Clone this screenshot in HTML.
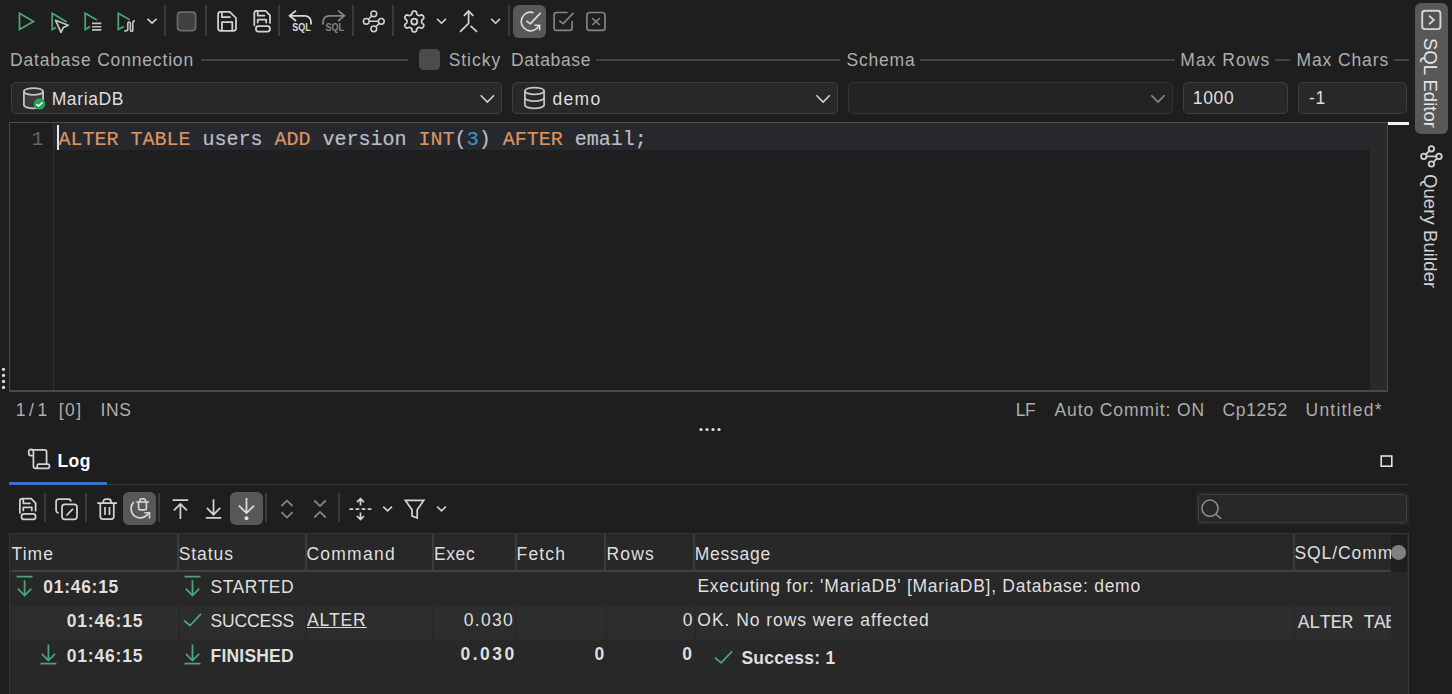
<!DOCTYPE html>
<html lang="en"><head><meta charset="utf-8"><title>SQL Commander</title>
<style>
html,body{margin:0;padding:0}
body{width:1452px;height:694px;background:#1e1e1e;overflow:hidden;position:relative;font-family:'Liberation Sans',sans-serif;color:#dfdfdf}
.t{position:absolute;white-space:pre;line-height:1;margin:0}
.a{position:absolute;box-sizing:border-box}
.sep{position:absolute;width:1.5px;background:#3a3a3a}
.hl{position:absolute;height:1.4px;background:#434343;top:59.3px}
.field{position:absolute;box-sizing:border-box;top:82px;height:32px;border:1px solid #3f3f3f;border-radius:5px;background:#282828}
.selbtn{position:absolute;box-sizing:border-box;border-radius:6px;background:#585858}
svg{position:absolute;left:0;top:0;overflow:visible}
.rot{transform-origin:0 0;transform:rotate(90deg)}
.clip{position:absolute;overflow:hidden}
</style></head>
<body>

<!-- ===== main toolbar ===== -->
<div id="toolbar">
  <div class="sep" style="left:164.2px;top:5px;height:31px"></div>
  <div class="sep" style="left:205.2px;top:5px;height:31px"></div>
  <div class="sep" style="left:278.2px;top:5px;height:31px"></div>
  <div class="sep" style="left:352.4px;top:5px;height:31px"></div>
  <div class="sep" style="left:392.4px;top:5px;height:31px"></div>
  <div class="sep" style="left:508px;top:5px;height:31px"></div>
  <div class="selbtn" style="left:513px;top:5px;width:33px;height:33px"></div>
  <svg width="1452" height="694" viewBox="0 0 1452 694" aria-hidden="true">
<path d="M19.5,13.3L33.5,21.4L19.5,29.5Z" fill="none" stroke="#4ba578" stroke-width="1.75"/>
<path d="M66.7,21.9L52.2,13.2V29.6L56,27.4" fill="none" stroke="#4ba578" stroke-width="1.75"/>
<path d="M55.6,20.3L68.2,25.3L63.3,27.5L61,32.3Z" fill="none" stroke="#c4c4bb" stroke-width="1.75" stroke-linejoin="round"/>
<path d="M96.9,20.1L85.2,13.2V29.6L90.3,26.6" fill="none" stroke="#4ba578" stroke-width="1.75"/>
<path d="M92,23.4H101.4M92,26.7H101.4M92,29.9H101.4" fill="none" stroke="#c4c4bb" stroke-width="1.65"/>
<path d="M129.6,19.8L118.3,13.2V29.6L123.8,26.4" fill="none" stroke="#4ba578" stroke-width="1.75"/>
<path d="M124.3,30.8H126.1a1.7,1.7 0 0 0 1.7,-1.7V23.4a1.3,1.3 0 0 1 2.6,0V30.2a1.2,1.2 0 0 0 2.4,0V23a2.2,2.2 0 0 1 2.2,-2.2" fill="none" stroke="#c4c4bb" stroke-width="1.65"/>
<path d="M147.5,18.9L152.05,23.2L156.6,18.9" fill="none" stroke="#d2d2d2" stroke-width="1.6"/>
<rect x="177.5" y="12.1" width="18.1" height="18.5" rx="3" fill="#404040" stroke="#6c6c6c" stroke-width="1.65"/>
<g fill="none" stroke="#d2d2d2" stroke-width="1.75" stroke-linejoin="round"><path d="M220.6,11.9H229.8L236,18V28.3a2.5,2.5 0 0 1 -2.5,2.5H220.6a2.5,2.5 0 0 1 -2.5,-2.5V14.4a2.5,2.5 0 0 1 2.5,-2.5Z"/><path d="M221.9,12.2V17.2H230.6"/><path d="M221.9,30.6V22.2H232.3V30.6"/></g>
<g transform="translate(0,0)" fill="none" stroke="#d2d2d2" stroke-width="1.75" stroke-linejoin="round" stroke-linecap="round"><path d="M254.3,25.2V13.3a2.4,2.4 0 0 1 2.4,-2.4H265.6L270,15.3V22.9"/><path d="M257.7,11.2V15.5H264.4"/><path d="M257.7,22.6V19.7H266.2V22.6"/><rect x="255.9" y="26.1" width="14.1" height="5.6" rx="2.6"/></g>
<g fill="none" stroke="#d8d8d8" stroke-width="1.75"><path d="M296,10.6L289.6,15.8L296,21"/><path d="M289.8,15.8H305a6,6 0 0 1 6,6V24.6"/></g>
<text x="292.3" y="30.9" font-family="'Liberation Sans',sans-serif" font-weight="700" font-size="10" fill="#d8d8d8" textLength="18.6" lengthAdjust="spacingAndGlyphs">SQL</text>
<g fill="none" stroke="#858585" stroke-width="1.75"><path d="M338,10.6L344.4,15.8L338,21"/><path d="M344.2,15.8H329a6,6 0 0 0 -6,6V24.6"/></g>
<text x="325.4" y="30.9" font-family="'Liberation Sans',sans-serif" font-weight="700" font-size="10" fill="#858585" textLength="18.6" lengthAdjust="spacingAndGlyphs">SQL</text>
<g fill="none" stroke="#d2d2d2" stroke-width="1.5"><circle cx="373.80" cy="13.80" r="2.9"/><circle cx="366.30" cy="21.30" r="2.9"/><circle cx="381.30" cy="21.30" r="2.9"/><circle cx="373.80" cy="28.80" r="2.9"/><path d="M369.20,21.30H378.40 M368.35,19.25L371.75,15.85 M379.25,23.35L375.85,26.75"/></g>
<path d="M421.60,21.50 L421.62,21.18 L421.68,20.85 L421.79,20.51 L421.95,20.15 L422.19,19.75 L422.90,19.20 L423.56,18.58 L423.73,18.07 L423.77,17.58 L423.72,17.11 L423.59,16.66 L423.39,16.25 L423.13,15.87 L422.81,15.54 L422.43,15.26 L421.98,15.05 L421.46,14.94 L420.59,15.21 L419.76,15.54 L419.29,15.55 L418.90,15.51 L418.55,15.43 L418.24,15.32 L417.95,15.18 L417.68,15.00 L417.43,14.78 L417.19,14.52 L416.96,14.20 L416.73,13.79 L416.60,12.90 L416.40,12.02 L416.04,11.62 L415.64,11.34 L415.21,11.15 L414.76,11.04 L414.30,11.00 L413.84,11.04 L413.39,11.15 L412.96,11.34 L412.56,11.62 L412.20,12.02 L412.00,12.90 L411.87,13.79 L411.64,14.20 L411.41,14.52 L411.17,14.78 L410.92,15.00 L410.65,15.18 L410.36,15.32 L410.05,15.43 L409.70,15.51 L409.31,15.55 L408.84,15.54 L408.01,15.21 L407.14,14.94 L406.62,15.05 L406.17,15.26 L405.79,15.54 L405.47,15.87 L405.21,16.25 L405.01,16.66 L404.88,17.11 L404.83,17.58 L404.87,18.07 L405.04,18.58 L405.70,19.20 L406.41,19.75 L406.65,20.15 L406.81,20.51 L406.92,20.85 L406.98,21.18 L407.00,21.50 L406.98,21.82 L406.92,22.15 L406.81,22.49 L406.65,22.85 L406.41,23.25 L405.70,23.80 L405.04,24.42 L404.87,24.93 L404.83,25.42 L404.88,25.89 L405.01,26.34 L405.21,26.75 L405.47,27.13 L405.79,27.46 L406.17,27.74 L406.62,27.95 L407.14,28.06 L408.01,27.79 L408.84,27.46 L409.31,27.45 L409.70,27.49 L410.05,27.57 L410.36,27.68 L410.65,27.82 L410.92,28.00 L411.17,28.22 L411.41,28.48 L411.64,28.80 L411.87,29.21 L412.00,30.10 L412.20,30.98 L412.56,31.38 L412.96,31.66 L413.39,31.85 L413.84,31.96 L414.30,32.00 L414.76,31.96 L415.21,31.85 L415.64,31.66 L416.04,31.38 L416.40,30.98 L416.60,30.10 L416.73,29.21 L416.96,28.80 L417.19,28.48 L417.43,28.22 L417.68,28.00 L417.95,27.82 L418.24,27.68 L418.55,27.57 L418.90,27.49 L419.29,27.45 L419.76,27.46 L420.59,27.79 L421.46,28.06 L421.98,27.95 L422.43,27.74 L422.81,27.46 L423.13,27.13 L423.39,26.75 L423.59,26.34 L423.72,25.89 L423.77,25.42 L423.73,24.93 L423.56,24.42 L422.90,23.80 L422.19,23.25 L421.95,22.85 L421.79,22.49 L421.68,22.15 L421.62,21.82Z" fill="none" stroke="#d2d2d2" stroke-width="1.75" stroke-linejoin="round"/>
<circle cx="414.3" cy="21.5" r="3" fill="none" stroke="#d2d2d2" stroke-width="1.75"/>
<path d="M437.1,18.9L441.5,23.2L445.9,18.9" fill="none" stroke="#d2d2d2" stroke-width="1.6"/>
<path d="M463.9,15.8L468.6,10.9L473.3,15.8M468.6,11V23.4L460,31.8M470.5,25.9L477.1,31.8" fill="none" stroke="#d2d2d2" stroke-width="1.75"/>
<path d="M491.2,18.9L495.6,23.2L500,18.9" fill="none" stroke="#d2d2d2" stroke-width="1.6"/>
<g fill="none" stroke="#dcdcdc" stroke-width="1.65"><path d="M533.6,12.7A9.3,9.3 0 1 0 538.9,25.6"/><path d="M534.5,25.2H539.6V30.6"/><path d="M526.4,20.8L530.3,23.8L540.6,12.9"/></g>
<g fill="none" stroke="#858585" stroke-width="1.65"><path d="M567.6,12.5H556.6a2.5,2.5 0 0 0 -2.5,2.5V27.9a2.5,2.5 0 0 0 2.5,2.5H569.6a2.5,2.5 0 0 0 2.5,-2.5V21"/><path d="M559.3,20.6L563.1,23.7L573.6,12.9"/></g>
<g fill="none" stroke="#858585" stroke-width="1.65"><rect x="586.9" y="12.5" width="18.1" height="17.9" rx="2.7"/><path d="M592.2,18.2L599.8,25M599.8,18.2L592.2,25"/></g>
</svg>
</div>

<!-- ===== connection form ===== -->
<div id="form">
  <div class="hl" style="left:200.5px;width:207.5px"></div>
  <div class="hl" style="left:596px;width:244px"></div>
  <div class="hl" style="left:920px;width:254.5px"></div>
  <div class="hl" style="left:1275px;width:15px"></div>
  <div class="hl" style="left:1394px;width:15px"></div>
  <div class="a" style="left:419px;top:48.6px;width:21px;height:21px;border-radius:4.5px;background:#4b4b4b"></div>
  <div class="field" style="left:11px;width:491px"></div>
  <div class="field" style="left:512px;width:326px"></div>
  <div class="field" style="left:848px;width:325px;background:#232323;border-color:#343434"></div>
  <div class="field" style="left:1183px;width:105px"></div>
  <div class="field" style="left:1297.5px;width:109.5px"></div>
  <svg width="1452" height="694" viewBox="0 0 1452 694" aria-hidden="true">
<g stroke="#c6c6c6" stroke-width="1.75"><path d="M23.9,91.4V105a9.6,3.4 0 0 0 19.2,0V91.4" fill="#3c3c3c"/><ellipse cx="33.5" cy="91.4" rx="9.6" ry="3.4" fill="#333"/></g>
<circle cx="39.5" cy="104" r="5.8" fill="#1fa55b"/><path d="M36.3,104.3L38.5,106L42.6,102.3" fill="none" stroke="#fff" stroke-width="1.6"/>
<path d="M480.7,95.3L487.35,102L494,95.3" fill="none" stroke="#d2d2d2" stroke-width="1.6"/>
<g fill="none" stroke="#c6c6c6" stroke-width="1.75"><ellipse cx="534.5" cy="90.9" rx="9.6" ry="3.4"/><path d="M524.9,90.9V104.9a9.6,3.4 0 0 0 19.2,0V90.9"/><path d="M524.9,97.7a9.6,3.4 0 0 0 19.2,0"/></g>
<path d="M816.4,95.3L823.0999999999999,102L829.8,95.3" fill="none" stroke="#d2d2d2" stroke-width="1.6"/>
<path d="M1151.3,95.3L1157.9499999999998,102L1164.6,95.3" fill="none" stroke="#8a8a8a" stroke-width="1.6"/>
</svg>
  <span class="t " style="left:9.95px;top:52px;font-size:17.5px;font-weight:400;color:#adadad;font-family:'Liberation Sans', sans-serif;letter-spacing:0.827px;">Database Connection</span>
<span class="t " style="left:448.65px;top:52px;font-size:17.5px;font-weight:400;color:#adadad;font-family:'Liberation Sans', sans-serif;letter-spacing:0.963px;">Sticky</span>
<span class="t " style="left:510.95px;top:52px;font-size:17.5px;font-weight:400;color:#adadad;font-family:'Liberation Sans', sans-serif;letter-spacing:0.654px;">Database</span>
<span class="t " style="left:846.45px;top:52px;font-size:17.5px;font-weight:400;color:#adadad;font-family:'Liberation Sans', sans-serif;letter-spacing:0.799px;">Schema</span>
<span class="t " style="left:1180.35px;top:52px;font-size:17.5px;font-weight:400;color:#adadad;font-family:'Liberation Sans', sans-serif;letter-spacing:1.016px;">Max Rows</span>
<span class="t " style="left:1296.45px;top:52px;font-size:17.5px;font-weight:400;color:#adadad;font-family:'Liberation Sans', sans-serif;letter-spacing:0.886px;">Max Chars</span>
<span class="t " style="left:51.65px;top:91px;font-size:17.5px;font-weight:400;color:#dfdfdf;font-family:'Liberation Sans', sans-serif;letter-spacing:0.620px;">MariaDB</span>
<span class="t " style="left:552.55px;top:91px;font-size:17.5px;font-weight:400;color:#dfdfdf;font-family:'Liberation Sans', sans-serif;letter-spacing:1.273px;">demo</span>
<span class="t " style="left:1192.75px;top:90px;font-size:17.5px;font-weight:400;color:#dfdfdf;font-family:'Liberation Sans', sans-serif;letter-spacing:0.654px;">1000</span>
<span class="t " style="left:1308.95px;top:90px;font-size:17.5px;font-weight:400;color:#dfdfdf;font-family:'Liberation Sans', sans-serif;letter-spacing:0.637px;">-1</span>
</div>

<!-- ===== editor ===== -->
<div id="editor-pane">
<div id="editor" class="a" style="left:9px;top:122px;width:1379px;height:270px;border:1px solid #484848;border-top:1.4px solid #4c4c4c;border-bottom:2px solid #484848;background:#1e1e1e">
  <div class="a" style="left:43.3px;top:0;width:1px;height:267px;background:#303030"></div>
  <div class="a" style="left:44px;top:0.3px;width:1316px;height:26.3px;background:#26282e"></div>
  <div class="a" style="left:1360px;top:0;width:17px;height:267px;background:#292929"></div>
  <div class="a" style="left:47px;top:1.6px;width:2px;height:25px;background:#dfe7e7"></div>
</div>
<div class="a" style="left:1388px;top:122px;width:21px;height:2.5px;background:#f2f2f2"></div>
<span class="t" style="left:31.6px;top:130px;font-family:'Liberation Mono',monospace;font-size:20px;color:#62656c">1</span>
<pre class="t" id="code" style="left:58.5px;top:130px;font-family:'Liberation Mono',monospace;font-size:20px;letter-spacing:0;color:#bcbec4;-webkit-text-stroke:0.2px"><span style="color:#dc9560">ALTER TABLE</span> users <span style="color:#dc9560">ADD</span> version <span style="color:#dc9560">INT</span>(<span style="color:#3a94c5">3</span>) <span style="color:#dc9560">AFTER</span> email;</pre>
<svg width="1452" height="694" viewBox="0 0 1452 694" aria-hidden="true">
<circle cx="3.5" cy="369.3" r="1.6" fill="#dedede"/>
<circle cx="3.5" cy="375.4" r="1.6" fill="#dedede"/>
<circle cx="3.5" cy="381.4" r="1.6" fill="#dedede"/>
<circle cx="3.5" cy="387.4" r="1.6" fill="#dedede"/>
<circle cx="701" cy="429.5" r="1.6" fill="#dedede"/>
<circle cx="707" cy="429.5" r="1.6" fill="#dedede"/>
<circle cx="713" cy="429.5" r="1.6" fill="#dedede"/>
<circle cx="719" cy="429.5" r="1.6" fill="#dedede"/>
</svg>
</div>

<!-- ===== editor status bar ===== -->
<div id="statusbar">
<span class="t " style="left:15.65px;top:402px;font-size:17.5px;font-weight:400;color:#adadad;font-family:'Liberation Sans', sans-serif;letter-spacing:-0.641px;">1 / 1</span>
<span class="t " style="left:58.85px;top:402px;font-size:17.5px;font-weight:400;color:#adadad;font-family:'Liberation Sans', sans-serif;letter-spacing:1.416px;">[0]</span>
<span class="t " style="left:100.55px;top:402px;font-size:17.5px;font-weight:400;color:#adadad;font-family:'Liberation Sans', sans-serif;letter-spacing:0.556px;">INS</span>
<span class="t " style="left:1015.75px;top:402px;font-size:17.5px;font-weight:400;color:#adadad;font-family:'Liberation Sans', sans-serif;letter-spacing:-0.438px;">LF</span>
<span class="t " style="left:1054.45px;top:402px;font-size:17.5px;font-weight:400;color:#adadad;font-family:'Liberation Sans', sans-serif;letter-spacing:0.898px;">Auto Commit: ON</span>
<span class="t " style="left:1222.55px;top:402px;font-size:17.5px;font-weight:400;color:#adadad;font-family:'Liberation Sans', sans-serif;letter-spacing:0.658px;">Cp1252</span>
<span class="t " style="left:1305.55px;top:402px;font-size:17.5px;font-weight:400;color:#adadad;font-family:'Liberation Sans', sans-serif;letter-spacing:1.218px;">Untitled*</span>
</div>

<!-- ===== log panel ===== -->
<div id="log">
  <div id="logtabs">
  <svg width="1452" height="694" viewBox="0 0 1452 694" aria-hidden="true">
<g fill="none" stroke="#d2d2d2" stroke-width="1.75" stroke-linejoin="round"><path d="M33.4,456V451.6a2.3,2.3 0 0 0 -4.6,0v2a2,2 0 0 0 2,2H33.4V466a2.4,2.4 0 0 0 2.4,2.4H47.4a2.1,2.1 0 0 0 0,-4.2H38.8a1.5,1.5 0 0 0 -1.5,1.5V466a1.9,1.9 0 0 1 -1.9,2.3"/><path d="M31.2,449.9H44.6a2,2 0 0 1 2,2V464"/></g>
<rect x="1381.2" y="456" width="10.6" height="10.2" fill="none" stroke="#e0e0e0" stroke-width="1.6"/>
</svg>
  <span class="t " style="left:57.45px;top:453px;font-size:17.5px;font-weight:700;color:#ffffff;font-family:'Liberation Sans', sans-serif;letter-spacing:0.411px;">Log</span>
  </div>
  <div class="a" style="left:9px;top:483.5px;width:1400px;height:1.2px;background:#393939"></div>
  <div class="a" style="left:9px;top:482px;width:98.2px;height:3px;background:#3574c4"></div>
  <div class="sep" style="left:44.2px;top:493.3px;height:29px"></div>
  <div class="sep" style="left:85.2px;top:493.3px;height:29px"></div>
  <div class="sep" style="left:158.2px;top:493.3px;height:29px"></div>
  <div class="sep" style="left:265.2px;top:493.3px;height:29px"></div>
  <div class="sep" style="left:338.2px;top:493.3px;height:29px"></div>
  <div class="selbtn" style="left:123px;top:492px;width:33px;height:33px"></div>
  <div class="selbtn" style="left:230px;top:492px;width:33px;height:33px"></div>
  <div class="a" style="left:1196px;top:492px;width:213px;height:33px;background:#262626"></div>
  <div class="a" style="left:1198px;top:494px;width:209px;height:28.5px;border:1px solid #3f3f3f;border-radius:4px;background:#282828"></div>

  <svg width="1452" height="694" viewBox="0 0 1452 694" aria-hidden="true">
<g transform="translate(-234.4,487.8)" fill="none" stroke="#d2d2d2" stroke-width="1.75" stroke-linejoin="round" stroke-linecap="round"><path d="M254.3,25.2V13.3a2.4,2.4 0 0 1 2.4,-2.4H265.6L270,15.3V22.9"/><path d="M257.7,11.2V15.5H264.4"/><path d="M257.7,22.6V19.7H266.2V22.6"/><rect x="255.9" y="26.1" width="14.1" height="5.6" rx="2.6"/></g>
<g fill="none" stroke="#d2d2d2" stroke-width="1.75"><path d="M70.9,501.6V501.6a2.6,2.6 0 0 0 -2.6,-2.6H58.7a2.6,2.6 0 0 0 -2.6,2.6V510.3a2.6,2.6 0 0 0 2.6,2.6"/><rect x="62" y="504.4" width="15" height="15" rx="2.8"/><path d="M66.4,515.5L73,508.9"/></g>
<g fill="none" stroke="#d2d2d2" stroke-width="1.75"><path d="M97.3,503.1H117"/><path d="M103.3,503V501.6a2.6,2.6 0 0 1 2.6,-2.6H108.4a2.6,2.6 0 0 1 2.6,2.6V503"/><path d="M100.3,503.3V516.6a2.5,2.5 0 0 0 2.5,2.5H111.3a2.5,2.5 0 0 0 2.5,-2.5V503.3"/><path d="M105,507V514.9M109.5,507V514.9" stroke-width="1.7"/></g>
<g fill="none" stroke="#d4d4d4" stroke-width="1.65"><path d="M133.9,501.9A9.3,9.3 0 1 0 148.6,512.9"/><path d="M144.3,512.7H149.5V518.4"/><path d="M136.3,502H149"/><path d="M139.9,502V500.6a1.8,1.8 0 0 1 1.8,-1.8H143.5a1.8,1.8 0 0 1 1.8,1.8V502"/><path d="M138.6,502.2V508a1.8,1.8 0 0 0 1.8,1.8H144.6a1.8,1.8 0 0 0 1.8,-1.8V502.2"/></g>
<path d="M172.6,500H188.2M180.4,519V504M173.9,510.4L180.4,503.9L186.9,510.4" fill="none" stroke="#d2d2d2" stroke-width="1.75"/>
<path d="M205.8,517.8H221.3M213.5,499.2V514.6M206.9,507.9L213.5,514.7L220.2,507.9" fill="none" stroke="#d2d2d2" stroke-width="1.75"/>
<path d="M246.5,498.1V513M238.9,505.6L246.5,513.1L254.1,505.6" fill="none" stroke="#dcdcdc" stroke-width="1.75"/><circle cx="246.5" cy="518.2" r="2" fill="#dcdcdc"/>
<path d="M281.4,506L287,500.6L292.6,506M281.4,512.2L287,517.6L292.6,512.2" fill="none" stroke="#858585" stroke-width="1.75"/>
<path d="M314.2,500.5L320,506.1L325.8,500.5M314.2,517.5L320,511.9L325.8,517.5" fill="none" stroke="#858585" stroke-width="1.75"/>
<path d="M349.5,509.1H371.4" fill="none" stroke="#d2d2d2" stroke-width="1.8" stroke-dasharray="3.7 2.37"/>
<path d="M360.5,498.6V505.5M357,502.2L360.5,498.7L364,502.2M360.5,512.6V519.5M357,516L360.5,519.5L364,516" fill="none" stroke="#d2d2d2" stroke-width="1.75"/>
<path d="M383.2,506.6L387.6,510.8L392,506.6" fill="none" stroke="#d2d2d2" stroke-width="1.6"/>
<path d="M405.4,500.4H423.7L417.2,509.8V518L412,516V509.8Z" fill="none" stroke="#d2d2d2" stroke-width="1.75" stroke-linejoin="miter"/>
<path d="M437.2,506.6L441.54999999999995,510.8L445.9,506.6" fill="none" stroke="#d2d2d2" stroke-width="1.6"/>
<g fill="none" stroke="#8f8f8f" stroke-width="1.5"><circle cx="1210" cy="508.2" r="8.1"/><path d="M1215.8,514.2L1221,518.6"/></g>
</svg>

  <div id="table" class="a" style="left:9px;top:533px;width:1400px;height:170px;border:1px solid #363636;background:#282828">
  </div>
  <!-- = alternate row shading -->
  <div class="a" style="left:11px;top:606px;width:166.5px;height:32.6px;background:#2d2d2d"></div>
  <div class="a" style="left:179.5px;top:606px;width:125px;height:32.6px;background:#2d2d2d"></div>
  <div class="a" style="left:307px;top:606px;width:125px;height:32.6px;background:#2d2d2d"></div>
  <div class="a" style="left:434px;top:606px;width:81px;height:32.6px;background:#2d2d2d"></div>
  <div class="a" style="left:517px;top:606px;width:87.5px;height:32.6px;background:#2d2d2d"></div>
  <div class="a" style="left:606.5px;top:606px;width:87px;height:32.6px;background:#2d2d2d"></div>
  <div class="a" style="left:695.5px;top:606px;width:597.5px;height:32.6px;background:#2d2d2d"></div>
  <div class="a" style="left:1295px;top:606px;width:96px;height:32.6px;background:#2d2d2d"></div>
  <!-- = header grid lines -->
  <div class="a" style="left:11px;top:570.1px;width:1380px;height:2px;background:#424242"></div>
  <div class="a" style="left:177.2px;top:534px;width:2px;height:36.5px;background:#3c3c3c"></div>
  <div class="a" style="left:304.5px;top:534px;width:2px;height:36.5px;background:#3c3c3c"></div>
  <div class="a" style="left:431.6px;top:534px;width:2px;height:36.5px;background:#3c3c3c"></div>
  <div class="a" style="left:514.5px;top:534px;width:2px;height:36.5px;background:#3c3c3c"></div>
  <div class="a" style="left:604.1px;top:534px;width:2px;height:36.5px;background:#3c3c3c"></div>
  <div class="a" style="left:692.9px;top:534px;width:2px;height:36.5px;background:#3c3c3c"></div>
  <div class="a" style="left:1292.7px;top:534px;width:2px;height:36.5px;background:#3c3c3c"></div>
  <div class="clip" style="left:1290px;top:540px;width:101px;height:28px"><span class="t" id="sqlc" style="left:4.5px;top:5.3px;font-size:17.5px;letter-spacing:0.9px">SQL/Comment</span></div>
  <div class="clip" style="left:1290px;top:608px;width:101px;height:28px"><span class="t" style="left:7.8px;top:5.5px;font-family:'Liberation Mono',monospace;font-size:19.5px;letter-spacing:-0.8px;color:#d8d8d8">ALTER TABLE users ADD version INT(3) AFTER email;</span></div>
  <div class="a" style="left:1391px;top:534.5px;width:16px;height:37px;background:#1e1e1e"></div>
  <div class="a" style="left:1391.2px;top:545.1px;width:14.6px;height:14.6px;border-radius:50%;background:#808080"></div>
  <div id="thead">
<span class="t " style="left:11.55px;top:546px;font-size:17.5px;font-weight:400;color:#dfdfdf;font-family:'Liberation Sans', sans-serif;letter-spacing:1.050px;">Time</span>
<span class="t " style="left:178.65px;top:546px;font-size:17.5px;font-weight:400;color:#dfdfdf;font-family:'Liberation Sans', sans-serif;letter-spacing:0.935px;">Status</span>
<span class="t " style="left:306.45px;top:546px;font-size:17.5px;font-weight:400;color:#dfdfdf;font-family:'Liberation Sans', sans-serif;letter-spacing:1.244px;">Command</span>
<span class="t " style="left:433.95px;top:546px;font-size:17.5px;font-weight:400;color:#dfdfdf;font-family:'Liberation Sans', sans-serif;letter-spacing:0.598px;">Exec</span>
<span class="t " style="left:516.55px;top:546px;font-size:17.5px;font-weight:400;color:#dfdfdf;font-family:'Liberation Sans', sans-serif;letter-spacing:1.155px;">Fetch</span>
<span class="t " style="left:606.55px;top:546px;font-size:17.5px;font-weight:400;color:#dfdfdf;font-family:'Liberation Sans', sans-serif;letter-spacing:1.178px;">Rows</span>
<span class="t " style="left:694.65px;top:546px;font-size:17.5px;font-weight:400;color:#dfdfdf;font-family:'Liberation Sans', sans-serif;letter-spacing:0.747px;">Message</span>
  </div>
  <div id="tbody">
<svg width="1452" height="694" viewBox="0 0 1452 694" aria-hidden="true">
<path d="M16.6,576.5H32.6M24.6,580.3V595.5M17.8,588.7L24.6,595.6L31.400000000000002,588.7" fill="none" stroke="#4ba578" stroke-width="1.75"/>
<path d="M184.5,576.5H200.5M192.5,580.3V595.5M185.7,588.7L192.5,595.6L199.3,588.7" fill="none" stroke="#4ba578" stroke-width="1.75"/>
<path d="M183.9,620.4L190.1,625.5L201.0,613.9" fill="none" stroke="#4ba578" stroke-width="1.75"/>
<path d="M48.4,644.4V660.4M41.8,653.8L48.4,660.5L55.0,653.8M40.4,663.6H56.4" fill="none" stroke="#4ba578" stroke-width="1.75"/>
<path d="M192.5,644.4V660.4M185.9,653.8L192.5,660.5L199.1,653.8M184.5,663.6H200.5" fill="none" stroke="#4ba578" stroke-width="1.75"/>
<path d="M715,657.8L721.2,662.9L732.1,651.3" fill="none" stroke="#4ba578" stroke-width="1.75"/>
</svg>
<span class="t " style="left:43.25px;top:579px;font-size:17.5px;font-weight:700;color:#dfdfdf;font-family:'Liberation Sans', sans-serif;letter-spacing:0.720px;">01:46:15</span>
<span class="t " style="left:210.55px;top:579px;font-size:17.5px;font-weight:400;color:#dfdfdf;font-family:'Liberation Sans', sans-serif;letter-spacing:0.506px;">STARTED</span>
<span class="t " style="left:697.45px;top:578px;font-size:17.5px;font-weight:400;color:#dfdfdf;font-family:'Liberation Sans', sans-serif;letter-spacing:0.720px;">Executing for: &#x27;MariaDB&#x27; [MariaDB], Database: demo</span>
<span class="t " style="left:66.75px;top:613px;font-size:17.5px;font-weight:700;color:#dfdfdf;font-family:'Liberation Sans', sans-serif;letter-spacing:0.820px;">01:46:15</span>
<span class="t " style="left:210.55px;top:613px;font-size:17.5px;font-weight:400;color:#dfdfdf;font-family:'Liberation Sans', sans-serif;letter-spacing:-0.168px;">SUCCESS</span>
<span class="t " style="left:306.95px;top:612px;font-size:17.5px;font-weight:400;color:#dfdfdf;font-family:'Liberation Sans', sans-serif;letter-spacing:0.923px;text-decoration:underline;text-underline-offset:1px;text-decoration-thickness:1.2px;">ALTER</span>
<span class="t " style="left:463.75px;top:612px;font-size:17.5px;font-weight:400;color:#dfdfdf;font-family:'Liberation Sans', sans-serif;letter-spacing:1.326px;">0.030</span>
<span class="t " style="left:682.84px;top:612px;font-size:17.5px;font-weight:400;color:#dfdfdf;font-family:'Liberation Sans', sans-serif;letter-spacing:0.000px;">0</span>
<span class="t " style="left:697.35px;top:612px;font-size:17.5px;font-weight:400;color:#dfdfdf;font-family:'Liberation Sans', sans-serif;letter-spacing:0.946px;">OK. No rows were affected</span>
<span class="t " style="left:66.75px;top:648px;font-size:17.5px;font-weight:700;color:#dfdfdf;font-family:'Liberation Sans', sans-serif;letter-spacing:0.820px;">01:46:15</span>
<span class="t " style="left:210.55px;top:648px;font-size:17.5px;font-weight:700;color:#dfdfdf;font-family:'Liberation Sans', sans-serif;letter-spacing:0.202px;">FINISHED</span>
<span class="t " style="left:460.55px;top:646px;font-size:17.5px;font-weight:700;color:#dfdfdf;font-family:'Liberation Sans', sans-serif;letter-spacing:2.451px;">0.030</span>
<span class="t " style="left:594.44px;top:646px;font-size:17.5px;font-weight:700;color:#dfdfdf;font-family:'Liberation Sans', sans-serif;letter-spacing:0.000px;">0</span>
<span class="t " style="left:682.14px;top:646px;font-size:17.5px;font-weight:700;color:#dfdfdf;font-family:'Liberation Sans', sans-serif;letter-spacing:0.000px;">0</span>
<span class="t " style="left:741.45px;top:650px;font-size:17.5px;font-weight:700;color:#dfdfdf;font-family:'Liberation Sans', sans-serif;letter-spacing:0.250px;">Success: 1</span>
  </div>
</div>

<!-- ===== right tool strip ===== -->
<div id="strip">
  <div class="selbtn" style="left:1415px;top:3px;width:33px;height:130.5px"></div>
  <svg width="1452" height="694" viewBox="0 0 1452 694" aria-hidden="true">
<rect x="1422.2" y="10.8" width="18.2" height="18.3" rx="2.8" fill="#525252" stroke="#d6d6d6" stroke-width="1.9"/>
<path d="M1429,15.6L1433.8,19.9L1429,24.4" fill="none" stroke="#d6d6d6" stroke-width="1.9"/>
<g fill="none" stroke="#d0d0d0" stroke-width="1.8"><circle cx="1431.40" cy="148.80" r="2.7"/><circle cx="1423.80" cy="156.40" r="2.7"/><circle cx="1439.00" cy="156.40" r="2.7"/><circle cx="1431.40" cy="164.00" r="2.7"/><path d="M1426.50,156.40H1436.30 M1425.71,154.49L1429.49,150.71 M1437.09,158.31L1433.31,162.09"/></g>
</svg>
  <span class="t rot" style="left:1439.26px;top:38.19px;font-size:18.5px;font-weight:400;color:#e6e6e6;font-family:'Liberation Sans', sans-serif;letter-spacing:0.010px;">SQL Editor</span>
<span class="t rot" style="left:1439.26px;top:173.89px;font-size:18.5px;font-weight:400;color:#d2d2d2;font-family:'Liberation Sans', sans-serif;letter-spacing:0.091px;">Query Builder</span>
</div>

</body></html>
